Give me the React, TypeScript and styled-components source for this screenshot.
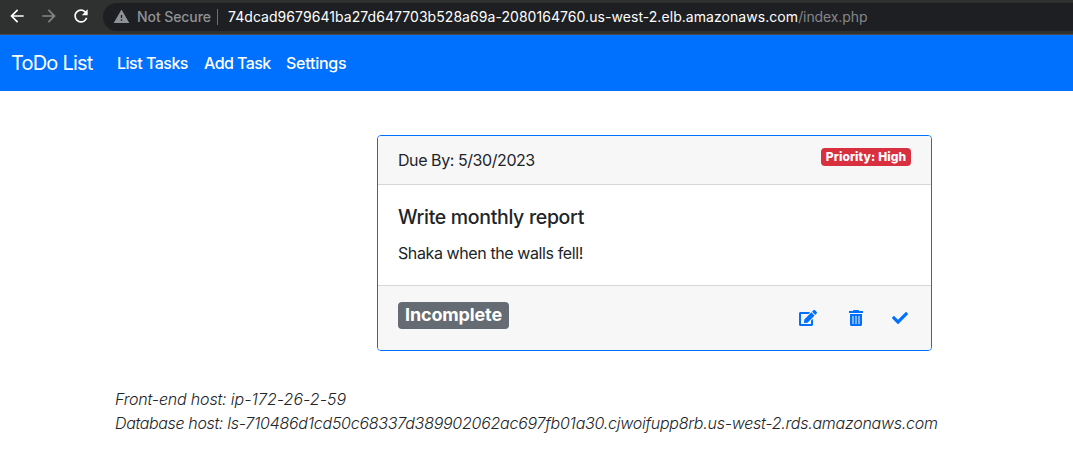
import React from "react";
import styled, { createGlobalStyle } from "styled-components";
import { FaCheck, FaEdit } from "react-icons/fa";
import { MdArrowBack, MdArrowForward, MdRefresh, MdWarning } from "react-icons/md";

const GlobalStyle = createGlobalStyle`
  *, *::before, *::after { box-sizing: border-box; }
  body {
    margin: 0;
    background: #fff;
    color: #212529;
    font: 400 16px/24px Inter, "Liberation Sans", sans-serif;
    overflow: hidden;
  }
`;

const BrowserBar = styled.div`
  display: flex;
  align-items: center;
  height: 35px;
  padding: 0 0 3px 7px;
  background: #2f3030;
  border-bottom: 1px solid #4b4b49;
  overflow: hidden;
`;

const BrowserButton = styled.span<{ $dim?: boolean }>`
  display: flex;
  width: 32px;
  flex: none;
  color: ${(p) => (p.$dim ? "#858585" : "#fff")};
`;

const AddressBar = styled.div`
  display: flex;
  align-items: center;
  flex: 1;
  height: 28px;
  margin: 2px -20px 0 0;
  padding-left: 10px;
  border-radius: 14px;
  background: #1e1f22;
  color: #8e9297;
  font-size: 14px;
  line-height: 20px;
  white-space: nowrap;
`;

const Security = styled.span`
  margin-left: 7px;
  width: 80px;
  letter-spacing: -0.08px;
  font-weight: 450;
`;

const Divider = styled.span`
  width: 1px;
  height: 16px;
  margin-right: 10px;
  background: #6d6f72;
`;

const Host = styled.span`
  color: #fff;
  letter-spacing: 0.055px;
`;

const Path = styled.span`
  color: #85878a;
  letter-spacing: -0.1px;
`;

const Navbar = styled.nav`
  display: flex;
  align-items: center;
  height: 56px;
  padding-left: 11px;
  background: #0070ff;
  color: #fff;
`;

const Brand = styled.span`
  width: 106px;
  font-size: 20px;
  line-height: 30px;
  letter-spacing: -0.8px;
  white-space: nowrap;
`;

const NavLink = styled.span<{ $width: number; $tracking: number }>`
  width: ${(p) => p.$width}px;
  font-weight: 500;
  letter-spacing: ${(p) => p.$tracking}px;
  white-space: nowrap;
`;

const Card = styled.article`
  width: 555px;
  height: 216px;
  margin: 44px 0 0 377px;
  border: 1px solid #0070ff;
  border-radius: 4px;
  overflow: hidden;
`;

const CardHeader = styled.header`
  display: flex;
  justify-content: space-between;
  align-items: flex-start;
  height: 49px;
  padding: 12px 20px;
  background: #f7f7f7;
  border-bottom: 1px solid #d6d6d6;
`;

const DueDate = styled.span`
  letter-spacing: -0.43px;
`;

const PriorityBadge = styled.span`
  width: 90px;
  height: 18px;
  border-radius: 4px;
  background: #d9303f;
  color: #fff;
  font-size: 12px;
  font-weight: 800;
  line-height: 18px;
  text-align: center;
  letter-spacing: 0.1px;
  white-space: nowrap;
`;

const CardBody = styled.div`
  height: 100px;
  padding: 20px 20px 0;
`;

const TaskTitle = styled.h5`
  margin: 0 0 12px;
  font-size: 19.5px;
  font-weight: 550;
  line-height: 24px;
  letter-spacing: -0.32px;
`;

const TaskText = styled.p`
  margin: 0;
  letter-spacing: -0.4px;
`;

const CardFooter = styled.footer`
  display: flex;
  justify-content: space-between;
  align-items: flex-start;
  height: 65px;
  padding: 16px 23px 0 20px;
  background: #f7f7f7;
  border-top: 1px solid #d6d6d6;
`;

const StatusBadge = styled.span`
  width: 111px;
  height: 27px;
  border-radius: 4px;
  background: #646b73;
  color: #fff;
  font-size: 18px;
  font-weight: 750;
  line-height: 26px;
  text-align: center;
  letter-spacing: -0.15px;
`;

const Actions = styled.div`
  display: flex;
  align-items: center;
  height: 32px;
  color: #0070ff;
  & > :nth-child(2) { margin: 0 28px 0 31px; }
`;

const HostInfo = styled.footer`
  margin: 36px 0 0 115px;
  font-style: italic;
  font-weight: 300;
  white-space: nowrap;
`;

const HostText = styled.span<{ $tracking: number }>`
  letter-spacing: ${(p) => p.$tracking}px;
`;

const TrashIcon = () => (
  <svg width="16" height="16" viewBox="0 0 16 16" fill="currentColor">
    <path d="M5.500 0h5l.7 1H15v2H1V1h3.800z" />
    <path d="M2 4h12v10.500a1.500 1.500 0 0 1-1.500 1.500h-9A1.500 1.500 0 0 1 2 14.500z" />
    <path d="M4 6h2v8H4zM7 6h2v8H7zM10 6h2v8h-2z" fill="#7cb3fb" />
  </svg>
);

export default function App() {
  return (
    <>
      <GlobalStyle />
      <BrowserBar>
        <BrowserButton><MdArrowBack size={20} /></BrowserButton>
        <BrowserButton $dim><MdArrowForward size={20} /></BrowserButton>
        <BrowserButton><MdRefresh size={20} /></BrowserButton>
        <AddressBar>
          <MdWarning size={17} />
          <Security>Not Secure</Security>
          <Divider />
          <Host>74dcad9679641ba27d647703b528a69a-2080164760.us-west-2.elb.amazonaws.com</Host>
          <Path>/index.php</Path>
        </AddressBar>
      </BrowserBar>
      <Navbar>
        <Brand>ToDo List</Brand>
        <NavLink $width={87} $tracking={-0.5}>List Tasks</NavLink>
        <NavLink $width={82} $tracking={-0.58}>Add Task</NavLink>
        <NavLink $width={62} $tracking={-0.25}>Settings</NavLink>
      </Navbar>
      <Card>
        <CardHeader>
          <DueDate>Due By: 5/30/2023</DueDate>
          <PriorityBadge>Priority: High</PriorityBadge>
        </CardHeader>
        <CardBody>
          <TaskTitle>Write monthly report</TaskTitle>
          <TaskText>Shaka when the walls fell!</TaskText>
        </CardBody>
        <CardFooter>
          <StatusBadge>Incomplete</StatusBadge>
          <Actions>
            <FaEdit size={18} />
            <TrashIcon />
            <FaCheck size={16} />
          </Actions>
        </CardFooter>
      </Card>
      <HostInfo>
        <div>
          <HostText $tracking={-0.18}>Front-end host: </HostText>
          <HostText $tracking={0.05}>ip-172-26-2-59</HostText>
        </div>
        <div>
          <HostText $tracking={-0.36}>Database host: </HostText>
          <HostText $tracking={-0.25}>ls-710486d1cd50c68337d389902062ac697fb01a30.cjwoifupp8rb.us-west-2.rds.amazonaws.com</HostText>
        </div>
      </HostInfo>
    </>
  );
}
